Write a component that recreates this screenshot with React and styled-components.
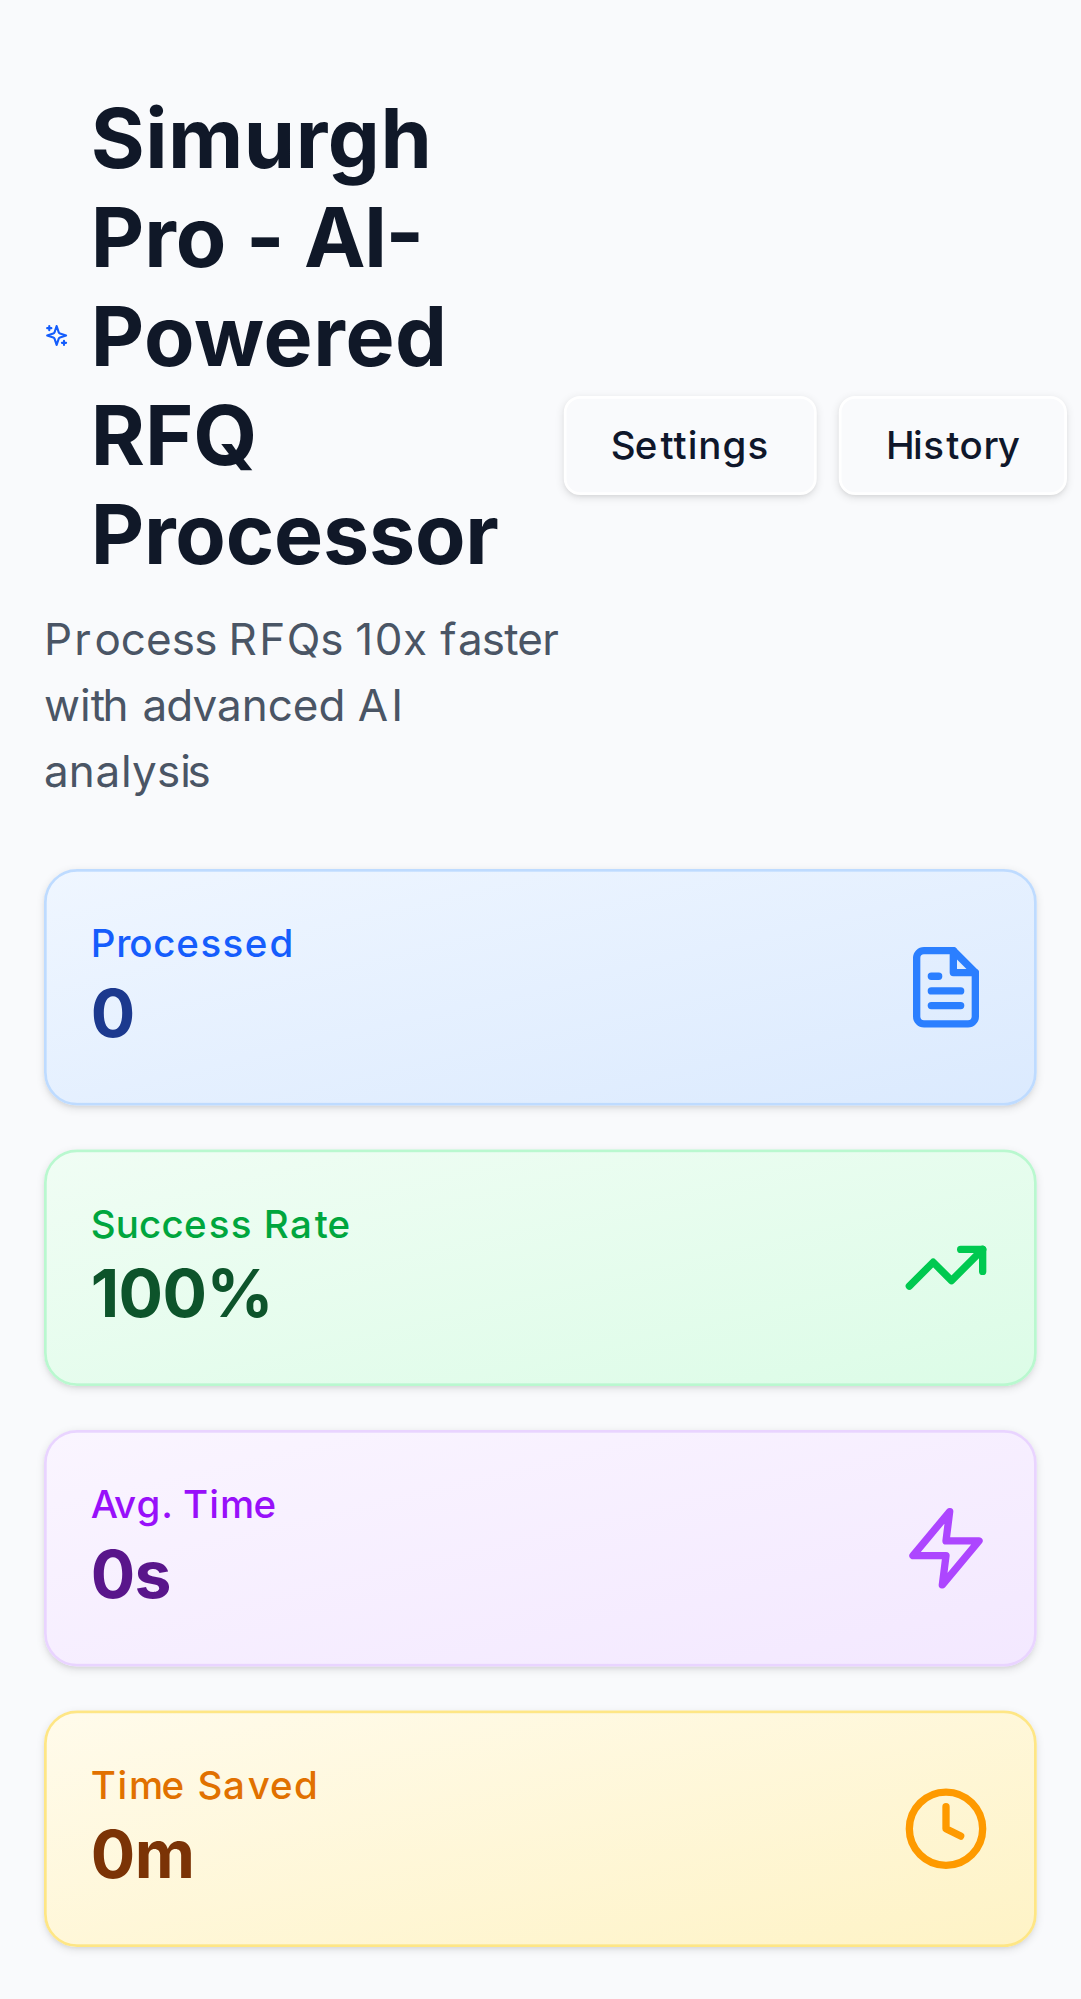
import React from "react";
import styled, { createGlobalStyle } from "styled-components";

const GlobalStyle = createGlobalStyle`
  *, *::before, *::after { box-sizing: border-box; }
  html, body { margin: 0; padding: 0; background: #f9fafc; overflow: hidden; }
  h1, p { margin: 0; }
  body { font-family: Inter, "Liberation Sans", sans-serif; }
`;

const Viewport = styled.div`
  width: 100vw;
  height: 100vh;
  overflow: hidden;
  background: #f9fafc;
`;

/* The phone layout is authored at 393px wide and magnified to fill the window. */
const Page = styled.main`
  width: 393px;
  min-height: 727px;
  padding: 32px 16px;
  transform: scale(2.75);
  transform-origin: 0 0;
  font-size: 16px;
  line-height: 24px;
`;

const Header = styled.header`
  display: flex;
  align-items: center;
  margin-bottom: 24px;
`;

const Intro = styled.div`
  flex: 0 0 189.1px;
`;

const TitleRow = styled.h1`
  display: flex;
  align-items: center;
  gap: 7.8px;
  color: #101828;
  font-size: 30px;
  line-height: 36px;
  font-weight: 700;
`;

const SparkIcon = styled.svg`
  flex: none;
  width: 9.2px;
  height: 32px;
  color: #155dfc;
`;

const Subtitle = styled.p`
  margin-top: 8px;
  color: #4a5565;
`;

const Actions = styled.div`
  display: flex;
  flex: none;
  gap: 8px;
`;

const Button = styled.button`
  height: 36px;
  padding: 0 16px;
  border: 1px solid #fff;
  border-radius: 6px;
  background: #f9fafc;
  color: #0f172b;
  font: 500 14px/20px Inter, "Liberation Sans", sans-serif;
  white-space: nowrap;
  box-shadow: 0 1px 3px rgba(0, 0, 0, 0.1), 0 1px 2px -1px rgba(0, 0, 0, 0.1);
`;

const Stats = styled.section`
  display: grid;
  gap: 16px;
`;

const Card = styled.article`
  display: flex;
  align-items: center;
  justify-content: space-between;
  padding: 16px;
  border: 1px solid ${(p) => p.$tone.border};
  border-radius: 12px;
  background: linear-gradient(to bottom right, ${(p) => p.$tone.from}, ${(p) => p.$tone.to});
  box-shadow: 0 1px 3px rgba(0, 0, 0, 0.1), 0 1px 2px -1px rgba(0, 0, 0, 0.1);
`;

const Label = styled.p`
  color: ${(p) => p.$color};
  font-size: 14px;
  line-height: 20px;
  font-weight: 500;
`;

const Value = styled.p`
  color: ${(p) => p.$color};
  font-size: 24px;
  line-height: 32px;
  font-weight: 700;
`;

const CardIcon = styled.svg`
  flex: none;
  width: 32px;
  height: 32px;
  color: ${(p) => p.$color};
`;

const Run = styled.span`
  letter-spacing: ${(p) => p.$track}px;
  font-feature-settings: "calt" ${(p) => (p.$plain ? 0 : 1)};
`;

/* Text with hand-set tracking: each run is [characters, letter spacing in px]. */
function Tracked({ runs }) {
  return (
    <span>
      {runs.map(([chars, track], i) => (
        <Run key={i} $track={track} $plain={chars === "- "}>
          {chars}
        </Run>
      ))}
    </span>
  );
}

const title = [
  ["Simurgh ", 0.18],
  ["Pro ", 0],
  ["- ", 0],
  ["AI-", -0.6],
  ["Powered ", 0.2],
  ["RFQ ", 0],
  ["Processor", -0.08],
];

const subtitle = [
  ["P", 0.8], ["r", 1.3], ["oce", 0], ["ss ", -0.25],
  ["R", 0.9], ["F", 0.6], ["Qs ", -0.1],
  ["1", 0.6], ["0x ", 0.15],
  ["f", 0.5], ["aste", -0.3], ["r ", 0],
  ["wi", 0], ["t", -0.9], ["h ", 0.25],
  ["ad", -0.3], ["vanced ", 0],
  ["A", 1.1], ["I ", 0],
  ["a", 0], ["na", 0.3], ["lys", 0.05], ["i", -1.3], ["s", 0],
];

const settings = [["S", -0.3], ["e", 1.1], ["tting", 0.37], ["s", 0.8]];
const history = [["H", -0.6], ["i", 0.2], ["s", 0.8], ["to", 0.25], ["r", -0.2], ["y", 0.4]];

const stroke = {
  viewBox: "0 0 24 24",
  fill: "none",
  stroke: "currentColor",
  strokeWidth: 2,
  strokeLinecap: "round",
  strokeLinejoin: "round",
  "aria-hidden": true,
};

const stats = [
  {
    id: "processed",
    label: [["P", 0.3], ["r", -0.7], ["oc", 0.25], ["e", 0.6], ["ss", 0.5], ["e", 0.8], ["d", 0]],
    value: [["0", 0]],
    tone: { from: "#eff6ff", to: "#dbeafe", border: "#bedbff", label: "#155dfc", value: "#1c398e", icon: "#2b7fff" },
    icon: (
      <>
        <path d="M14 2H6a2 2 0 0 0-2 2v16a2 2 0 0 0 2 2h12a2 2 0 0 0 2-2V8z" />
        <path d="M14 2v6h6M16 13H8M16 17H8M10 9H8" />
      </>
    ),
  },
  {
    id: "success",
    label: [["Succ", 0.06], ["e", 0.8], ["s", 0.5], ["s ", 0.35], ["R", 0.4], ["a", 1.1], ["te", 0]],
    value: [["100%", -0.22]],
    tone: { from: "#f0fdf4", to: "#dcfce7", border: "#b9f8cf", label: "#00a63e", value: "#0d542b", icon: "#00c950" },
    icon: (
      <>
        <polyline points="22 7 13.5 15.5 8.5 10.5 2 17" />
        <polyline points="16 7 22 7 22 13" />
      </>
    ),
  },
  {
    id: "average",
    label: [["A", -1.5], ["v", 0.1], ["g", 0.4], [". ", 0], ["T", 0.4], ["i", 0.4], ["m", -0.3], ["e", 0]],
    value: [["0s", -0.25]],
    tone: { from: "#faf5ff", to: "#f3e8ff", border: "#e9d4ff", label: "#9810fa", value: "#59168b", icon: "#ad46ff" },
    icon: <polygon points="13 2 3 14 12 14 11 22 21 10 12 10 13 2" />,
  },
  {
    id: "saved",
    label: [["T", 0.6], ["i", 0.6], ["m", -0.6], ["e ", 0.55], ["S", 0.2], ["a", 1.05], ["v", 0.1], ["e", 0.5], ["d", 0]],
    value: [["0m", -0.15]],
    tone: { from: "#fffbeb", to: "#fef3c6", border: "#fee685", label: "#e17100", value: "#7b3306", icon: "#fe9a00" },
    icon: (
      <>
        <circle cx="12" cy="12" r="10" />
        <polyline points="12 6 12 12 16 14" />
      </>
    ),
  },
];

export default function App() {
  return (
    <Viewport>
      <GlobalStyle />
      <Page>
        <Header>
          <Intro>
            <TitleRow>
              <SparkIcon {...stroke}>
                <path d="m12 3-1.912 5.813a2 2 0 0 1-1.275 1.275L3 12l5.813 1.912a2 2 0 0 1 1.275 1.275L12 21l1.912-5.813a2 2 0 0 1 1.275-1.275L21 12l-5.813-1.912a2 2 0 0 1-1.275-1.275L12 3Z" />
                <path d="M5 3v4M19 17v4M3 5h4M17 19h4" />
              </SparkIcon>
              <Tracked runs={title} />
            </TitleRow>
            <Subtitle>
              <Tracked runs={subtitle} />
            </Subtitle>
          </Intro>
          <Actions>
            <Button type="button">
              <Tracked runs={settings} />
            </Button>
            <Button type="button">
              <Tracked runs={history} />
            </Button>
          </Actions>
        </Header>
        <Stats>
          {stats.map((s) => (
            <Card key={s.id} $tone={s.tone}>
              <div>
                <Label $color={s.tone.label}>
                  <Tracked runs={s.label} />
                </Label>
                <Value $color={s.tone.value}>
                  <Tracked runs={s.value} />
                </Value>
              </div>
              <CardIcon {...stroke} $color={s.tone.icon}>
                {s.icon}
              </CardIcon>
            </Card>
          ))}
        </Stats>
      </Page>
    </Viewport>
  );
}
